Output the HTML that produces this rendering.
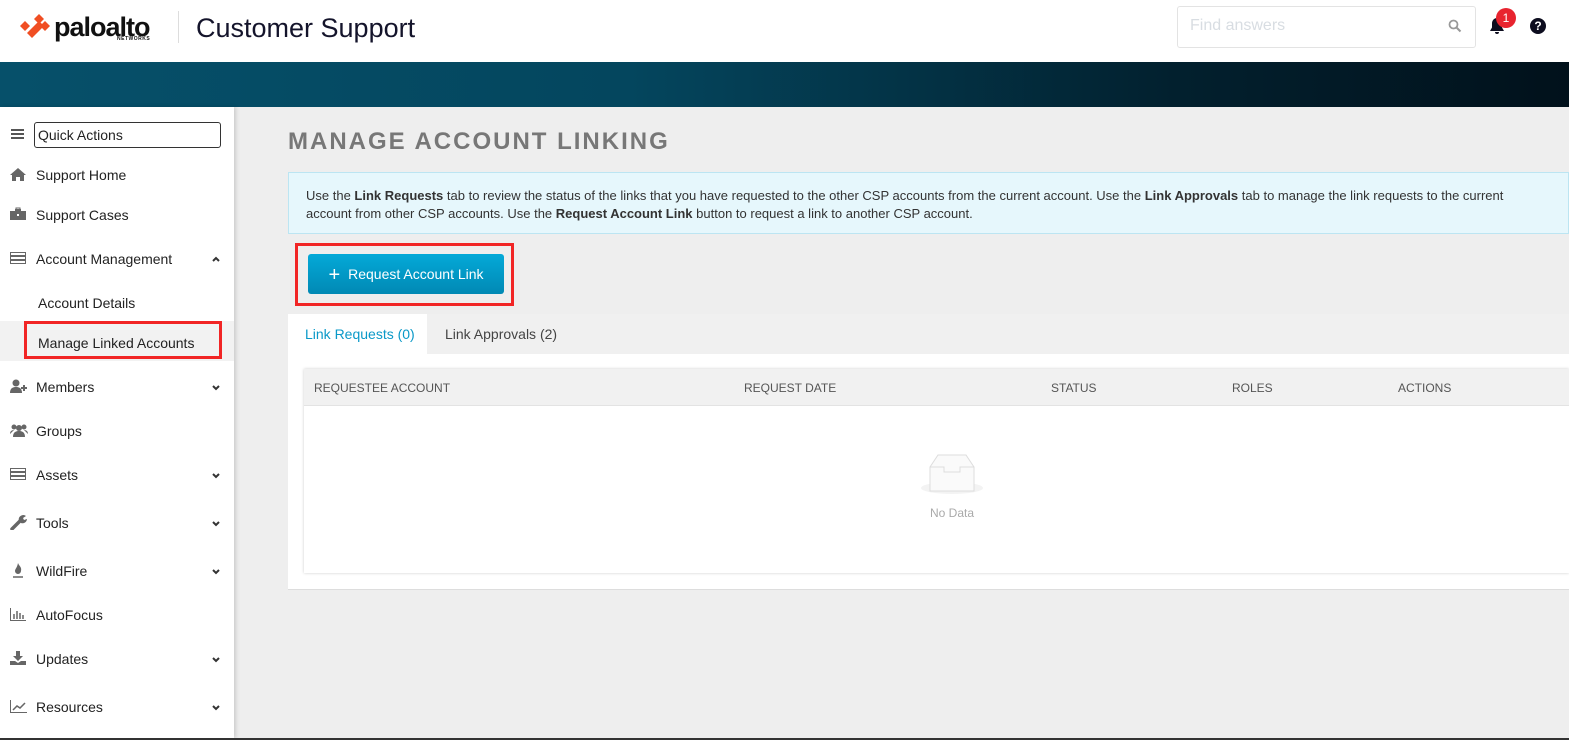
<!DOCTYPE html>
<html><head><meta charset="utf-8"><style>
*{box-sizing:border-box;margin:0;padding:0}
body{width:1569px;height:740px;overflow:hidden;background:#eeeeee;font-family:"Liberation Sans",sans-serif;position:relative;color:#333}
.abs{position:absolute}
#hdr{left:0;top:0;width:1569px;height:62px;background:#fff}
#ban{left:0;top:62px;width:1569px;height:45px;background:linear-gradient(90deg,#06506a 0%,#04465e 40%,#02202e 75%,#01111b 100%)}
#side{left:0;top:107px;width:234px;height:631px;background:#fff;box-shadow:2px 0 4px rgba(0,0,0,.15)}
.item{position:absolute;left:0;width:234px;font-size:14px;color:#222;height:16px}
.item svg.ic{position:absolute;left:10px;top:0}
.item .tx{position:absolute;left:36px}
.chev{position:absolute;left:211px;top:5px}
.th{position:absolute;top:12px;font-size:12px;color:#555}
</style></head><body>
<div id="hdr" class="abs">
 <svg class="abs" style="left:20px;top:14px" width="32" height="24" viewBox="0 0 32 24">
  <g fill="#f04e23"><polygon points="0,12 5,7 10,12 5,17"/><polygon points="7,19 19,7 24,12 12,24"/><polygon points="14,5 19,0 24,5 19,10"/><polygon points="21,12 26,7 31,12 26,17" transform="translate(-1,0)"/></g>
 </svg>
 <div class="abs" style="left:54px;top:12px;font-size:27px;font-weight:bold;color:#111;letter-spacing:-1px">paloalto</div>
 <div class="abs" style="left:117px;top:36px;font-size:5px;font-weight:bold;color:#111;letter-spacing:.5px">NETWORKS</div>
 <div class="abs" style="left:178px;top:11px;width:1px;height:32px;background:#ddd"></div>
 <div class="abs" style="left:196px;top:13px;font-size:27px;color:#14142b">Customer Support</div>
 <div class="abs" style="left:1177px;top:6px;width:299px;height:42px;border:1px solid #e3e3e3;border-radius:3px;background:#fff"></div>
 <div class="abs" style="left:1190px;top:17px;font-size:16px;color:#d8dde2">Find answers</div>
 <svg class="abs" style="left:1448px;top:19px" width="14" height="14" viewBox="0 0 14 14"><circle cx="5.5" cy="5.5" r="4" fill="none" stroke="#999" stroke-width="1.8"/><line x1="8.5" y1="8.5" x2="12.5" y2="12.5" stroke="#999" stroke-width="2"/></svg>
 <svg class="abs" style="left:1488px;top:17px" width="18" height="18" viewBox="0 0 18 18"><path d="M9 1c-3 0-5 2.5-5 5.5v4L2 14h14l-2-3.5v-4C14 3.5 12 1 9 1z M7 15h4a2 2 0 0 1-4 0z" fill="#0d0d1f"/></svg>
 <div class="abs" style="left:1496px;top:8px;width:20px;height:20px;border-radius:50%;background:#e8242f;color:#fff;font-size:12px;text-align:center;line-height:20px">1</div>
 <div class="abs" style="left:1530px;top:18px;width:16px;height:16px;border-radius:50%;background:#0d0d1f;color:#fff;font-size:12px;font-weight:bold;text-align:center;line-height:16px">?</div>
</div>
<div id="ban" class="abs"></div>
<div id="side" class="abs">
 <div class="abs" style="left:11px;top:22px;width:13px;height:2px;background:#555;box-shadow:0 4px #555,0 8px #555"></div>
 <div class="abs" style="left:34px;top:15px;width:187px;height:26px;border:1px solid #333;border-radius:3px;font-size:14px;padding:4px 3px;color:#222">Quick Actions</div>
 <div class="item" style="top:60px"><svg class="ic" width="16" height="14" viewBox="0 0 16 14"><path d="M8 1L0 8h2v6h4V10h4v4h4V8h2z" fill="#666"/></svg><span class="tx">Support Home</span></div>
 <div class="item" style="top:100px"><svg class="ic" width="16" height="14" viewBox="0 0 16 14"><path d="M5 2h6v2H5z M0 4h16v9H0z" fill="#666"/><rect x="6" y="1" width="4" height="2" fill="none" stroke="#666"/><rect x="7" y="7" width="2" height="2" fill="#fff"/></svg><span class="tx">Support Cases</span></div>
 <div class="item" style="top:144px"><svg class="ic" width="16" height="14" viewBox="0 0 16 14"><g fill="none" stroke="#666"><rect x=".5" y="1.5" width="15" height="3"/><rect x=".5" y="5.5" width="15" height="3"/><rect x=".5" y="9.5" width="15" height="3"/></g></svg><span class="tx">Account Management</span><svg class="chev" width="10" height="7" viewBox="0 0 10 7"><path d="M2 5L5 2L8 5" fill="none" stroke="#333" stroke-width="2"/></svg></div>
 <div class="item" style="top:188px"><span class="tx" style="left:38px">Account Details</span></div>
 <div class="abs" style="left:0;top:214px;width:234px;height:40px;background:#f2f2f2"></div>
 <div class="abs" style="left:24px;top:214px;width:198px;height:38px;border:3px solid #f12525"></div>
 <div class="item" style="top:228px"><span class="tx" style="left:38px">Manage Linked Accounts</span></div>
 <div class="item" style="top:272px"><svg class="ic" width="18" height="14" viewBox="0 0 18 14"><circle cx="6" cy="4" r="3.5" fill="#666"/><path d="M0 14c0-5 3-6 6-6s6 1 6 6z" fill="#666"/><path d="M14 6v6M11 9h6" stroke="#666" stroke-width="2"/></svg><span class="tx">Members</span><svg class="chev" width="10" height="7" viewBox="0 0 10 7"><path d="M2 2L5 5L8 2" fill="none" stroke="#333" stroke-width="2"/></svg></div>
 <div class="item" style="top:316px"><svg class="ic" width="18" height="14" viewBox="0 0 18 14"><circle cx="4" cy="4" r="2.5" fill="#666"/><circle cx="14" cy="4" r="2.5" fill="#666"/><circle cx="9" cy="5" r="3" fill="#666"/><path d="M3 14c0-5 3-6 6-6s6 1 6 6z M0 11c0-3 2-4 4-4 M18 11c0-3-2-4-4-4" fill="#666"/></svg><span class="tx">Groups</span></div>
 <div class="item" style="top:360px"><svg class="ic" width="16" height="14" viewBox="0 0 16 14"><g fill="none" stroke="#666"><rect x=".5" y="1.5" width="15" height="3"/><rect x=".5" y="5.5" width="15" height="3"/><rect x=".5" y="9.5" width="15" height="3"/></g></svg><span class="tx">Assets</span><svg class="chev" width="10" height="7" viewBox="0 0 10 7"><path d="M2 2L5 5L8 2" fill="none" stroke="#333" stroke-width="2"/></svg></div>
 <div class="item" style="top:408px"><svg class="ic" width="18" height="16" viewBox="0 0 18 16" style="top:-1px"><path d="M2 15L10 7" stroke="#666" stroke-width="3.5" stroke-linecap="round"/><path d="M9 7a4.5 4.5 0 0 1 7-5l-3 2 1 2 3-1a4.5 4.5 0 0 1-6 4z" fill="#666"/></svg><span class="tx">Tools</span><svg class="chev" width="10" height="7" viewBox="0 0 10 7"><path d="M2 2L5 5L8 2" fill="none" stroke="#333" stroke-width="2"/></svg></div>
 <div class="item" style="top:456px"><svg class="ic" width="16" height="16" viewBox="0 0 16 16" style="top:-1px"><path d="M8 1c1 3 4 4 3 8a3 3 0 0 1-6 0c0-2 2-3 3-8z" fill="#666"/><path d="M3 15h10" stroke="#666" stroke-width="1.5"/></svg><span class="tx">WildFire</span><svg class="chev" width="10" height="7" viewBox="0 0 10 7"><path d="M2 2L5 5L8 2" fill="none" stroke="#333" stroke-width="2"/></svg></div>
 <div class="item" style="top:500px"><svg class="ic" width="16" height="14" viewBox="0 0 16 14"><path d="M.5 1v12.5H16" fill="none" stroke="#666"/><path d="M4 7v5M7 4v8M10 6v6M13 8v4" stroke="#666" stroke-width="1.5"/></svg><span class="tx">AutoFocus</span></div>
 <div class="item" style="top:544px"><svg class="ic" width="16" height="14" viewBox="0 0 16 14"><path d="M6 0h4v5h3l-5 5-5-5h3z" fill="#666"/><path d="M0 10h5l3 2 3-2h5v4H0z" fill="#666"/></svg><span class="tx">Updates</span><svg class="chev" width="10" height="7" viewBox="0 0 10 7"><path d="M2 2L5 5L8 2" fill="none" stroke="#333" stroke-width="2"/></svg></div>
 <div class="item" style="top:592px"><svg class="ic" width="17" height="14" viewBox="0 0 17 14"><path d="M.5 1v12.5H17" fill="none" stroke="#666"/><path d="M3 11l4-4 3 2 5-5" fill="none" stroke="#666" stroke-width="1.5"/></svg><span class="tx">Resources</span><svg class="chev" width="10" height="7" viewBox="0 0 10 7"><path d="M2 2L5 5L8 2" fill="none" stroke="#333" stroke-width="2"/></svg></div>
</div>
<div class="abs" style="left:0;top:738px;width:1569px;height:2px;background:#333"></div>
<div class="abs" style="left:288px;top:128px;font-size:24px;font-weight:bold;color:#777;letter-spacing:2px">MANAGE ACCOUNT LINKING</div>
<div class="abs" style="left:288px;top:172px;width:1281px;height:62px;background:#e6f7fc;border:1px solid #bce5f2;font-size:13px;line-height:18px;color:#333;padding:14px 16px 0 17px">Use the <b>Link Requests</b> tab to review the status of the links that you have requested to the other CSP accounts from the current account. Use the <b>Link Approvals</b> tab to manage the link requests to the current account from other CSP accounts. Use the <b>Request Account Link</b> button to request a link to another CSP account.</div>
<div class="abs" style="left:295px;top:243px;width:219px;height:63px;border:3px solid #f12525"></div>
<div class="abs" style="left:308px;top:254px;width:196px;height:40px;background:linear-gradient(#04a9d8,#0189b4);border-radius:3px;color:#fff;font-size:14px;line-height:40px;text-align:center"><span style="font-size:20px;vertical-align:-2px;margin-right:8px">+</span>Request Account Link</div>
<div class="abs" style="left:288px;top:314px;width:1281px;height:276px;background:#fff;border-bottom:1px solid #ddd"></div>
<div class="abs" style="left:427px;top:314px;width:1142px;height:40px;background:#f0f0f0"></div>
<div class="abs" style="left:305px;top:326px;font-size:14px;color:#0a99c8">Link Requests (0)</div>
<div class="abs" style="left:445px;top:326px;font-size:14px;color:#444">Link Approvals (2)</div>
<div class="abs" style="left:304px;top:369px;width:1265px;height:204px;background:#fff;box-shadow:0 0 3px rgba(0,0,0,.2)"></div>
<div class="abs" style="left:304px;top:369px;width:1265px;height:37px;background:#f1f1f1;border-bottom:1px solid #e3e3e3">
 <span class="th" style="left:10px">REQUESTEE ACCOUNT</span><span class="th" style="left:440px">REQUEST DATE</span><span class="th" style="left:747px">STATUS</span><span class="th" style="left:928px">ROLES</span><span class="th" style="left:1094px">ACTIONS</span>
</div>
<svg class="abs" style="left:920px;top:453px" width="64" height="42" viewBox="0 0 64 42"><ellipse cx="32" cy="35" rx="31" ry="6" fill="#f3f3f3"/><path d="M10 14 L18 2 H46 L54 14 V38 H10 Z" fill="#fafafa" stroke="#ddd"/><path d="M10 14 H24 V19 H40 V14 H54" fill="none" stroke="#ddd"/></svg>
<div class="abs" style="left:930px;top:506px;font-size:12px;color:#aaa">No Data</div>
</body></html>
